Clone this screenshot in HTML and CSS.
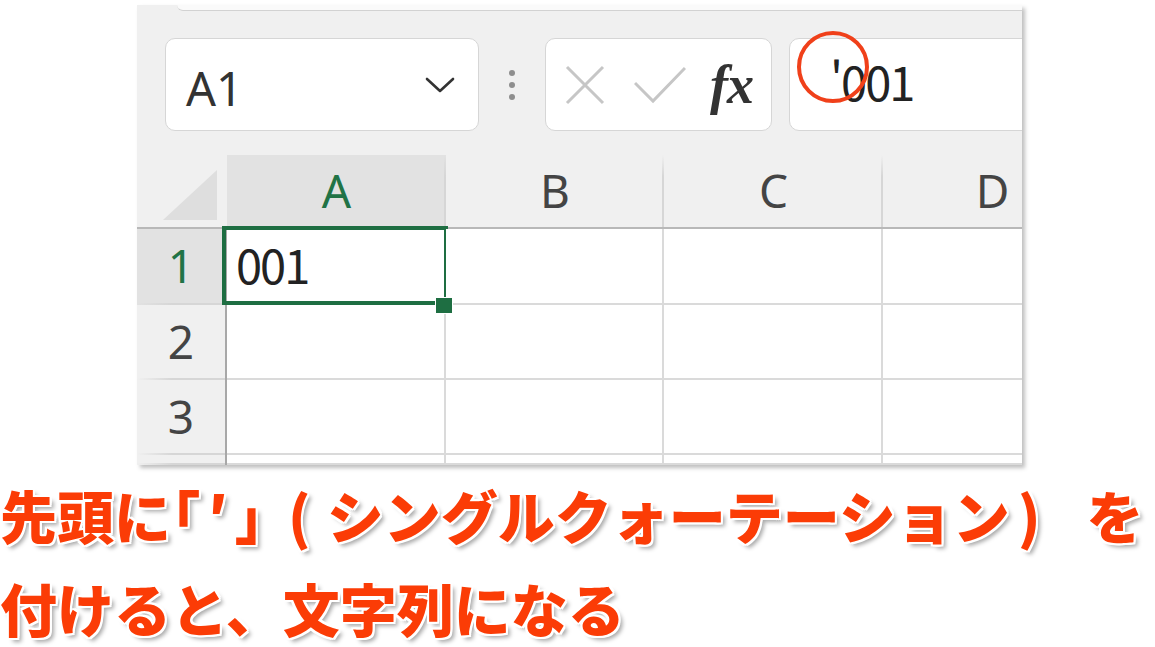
FILE: index.html
```html
<!DOCTYPE html>
<html lang="ja">
<head>
    <meta charset="UTF-8">
    <meta name="viewport" content="width=device-width, initial-scale=1.0">
    <title>先頭に「'」を付けると文字列になる</title>
    <link rel="stylesheet" href="styles.css">
</head>
<body>

    <!-- Excel window crop -->
    <div class="excel">
        <div class="ribbon-edge"></div>

        <div class="formula-row">
            <div class="name-box">
                <span class="ref">A1</span>
                <svg class="chev" width="32" height="18" viewBox="0 0 32 18">
                    <path d="M3 3 L16 15 L29 3" fill="none" stroke="#333" stroke-width="2.6" stroke-linecap="round" stroke-linejoin="round"/>
                </svg>
            </div>
            <div class="grip"><i></i><i></i><i></i></div>
            <div class="fx-box">
                <svg class="icon-x" width="40" height="40" viewBox="0 0 40 40">
                    <path d="M2 2 L38 38 M38 2 L2 38" stroke="#c6c6c6" stroke-width="3"/>
                </svg>
                <svg class="icon-check" width="52" height="38" viewBox="0 0 52 38">
                    <path d="M1 17 L19 35 L51 2" fill="none" stroke="#c6c6c6" stroke-width="3"/>
                </svg>
                <span class="fx">fx</span>
            </div>
            <div class="formula-input">
                <span class="formula-text">'001</span>
                <span class="mark"></span>
            </div>
        </div>

        <div class="sheet">
            <div class="corner">
                <svg width="90" height="74" viewBox="0 0 90 74">
                    <polygon points="80,15 80,65 26,65" fill="#dedede"/>
                </svg>
            </div>
            <div class="col-head active">A</div>
            <div class="col-head">B</div>
            <div class="col-head">C</div>
            <div class="col-head">D</div>

            <div class="row-head active">1</div>
            <div class="cell selected">001<span class="handle"></span></div>
            <div class="cell"></div>
            <div class="cell"></div>
            <div class="cell"></div>

            <div class="row-head">2</div>
            <div class="cell"></div>
            <div class="cell"></div>
            <div class="cell"></div>
            <div class="cell"></div>

            <div class="row-head">3</div>
            <div class="cell"></div>
            <div class="cell"></div>
            <div class="cell"></div>
            <div class="cell"></div>

            <div class="row-head"></div>
            <div class="cell"></div>
            <div class="cell"></div>
            <div class="cell"></div>
            <div class="cell"></div>
        </div>
    </div>

    <div class="caption">
        <p>先頭に<span class="br">「′」</span><span class="paren">(</span>シングルクォーテーション<span class="paren close">)</span>を</p>
        <p>付けると、文字列になる</p>
    </div>

</body>
</html>
```

FILE: styles.css
```css
body {
    margin: 0;
    width: 1155px;
    height: 647px;
    overflow: hidden;
    background: #fff;
    font-family: 'Noto Sans', 'Noto Sans CJK JP', sans-serif;
}
.excel {
    margin: 5px 0 0 137px;
    width: 885px;
    height: 460px;
    background: #f0f0f0;
    overflow: hidden;
    box-shadow: 3px 3px 4px rgba(0, 0, 0, 0.25);
}
.ribbon-edge {
    height: 5px;
    margin-left: 40px;
    background: #fafafa;
    border-bottom: 1px solid #d2d2d2;
    border-bottom-left-radius: 8px;
}

/* formula bar */
.formula-row {
    display: flex;
    padding: 27px 0 0 28px;
    height: 93px;
}
.name-box {
    flex-shrink: 0;
    width: 314px;
    height: 93px;
    box-sizing: border-box;
    background: #fff;
    border: 1px solid #d6d6d6;
    border-radius: 10px;
    display: flex;
    align-items: center;
    justify-content: space-between;
    padding: 6px 22px 0 20px;
}
.ref {
    font-size: 47px;
    color: #333;
}
.chev {
    margin-top: -6px;
}
.grip {
    flex-shrink: 0;
    width: 66px;
    display: flex;
    flex-direction: column;
    align-items: center;
    justify-content: center;
    gap: 6px;
}
.grip i {
    width: 6px;
    height: 6px;
    border-radius: 50%;
    background: #8e8e8e;
}
.fx-box {
    flex-shrink: 0;
    width: 227px;
    height: 93px;
    box-sizing: border-box;
    background: #fff;
    border: 1px solid #d6d6d6;
    border-radius: 10px;
    display: flex;
    align-items: center;
    padding-left: 19px;
}
.icon-x {
    margin-right: 29px;
}
.icon-check {
    margin-right: 24px;
}
.fx {
    font-family: 'Liberation Serif', serif;
    font-style: italic;
    font-weight: bold;
    font-size: 54px;
    color: #333;
    letter-spacing: -1px;
}
.formula-input {
    position: relative;
    flex-shrink: 0;
    margin-left: 17px;
    width: 300px;
    height: 93px;
    box-sizing: border-box;
    background: #fff;
    border: 1px solid #d6d6d6;
    border-radius: 10px;
    padding: 7px 0 0 40px;
}
.formula-text {
    font-family: 'Noto Sans CJK JP', sans-serif;
    font-size: 47px;
    color: #222;
    letter-spacing: -2px;
}
.mark {
    position: absolute;
    left: 7px;
    top: -8px;
    width: 64px;
    height: 64px;
    border: 4.5px solid #f0401a;
    border-radius: 50%;
}

/* grid */
.sheet {
    margin-top: 24px;
    display: grid;
    grid-template-columns: 90px 219px 218px 219px 219px;
    grid-template-rows: 74px 76px 75px 75px 10px;
}
.corner {
    border-bottom: 2px solid #b8b8b8;
    box-sizing: border-box;
}
.corner svg {
    display: block;
}
.col-head {
    box-sizing: border-box;
    border-bottom: 2px solid #b8b8b8;
    background: linear-gradient(to bottom, rgba(214, 214, 214, 0), #d6d6d6 30%) no-repeat right / 2px 100%;
    font-size: 46px;
    color: #444;
    text-align: center;
    line-height: 70px;
}
.col-head.active {
    background-color: #e2e2e2;
    color: #217346;
}
.row-head {
    box-sizing: border-box;
    border-right: 2px solid #a8a8a8;
    background: linear-gradient(to right, rgba(214, 214, 214, 0), #d6d6d6 40%) no-repeat bottom / 100% 2px;
    font-size: 46px;
    color: #444;
    text-align: center;
    line-height: 72px;
}
.row-head.active {
    background-color: #e2e2e2;
    color: #217346;
}
.cell {
    position: relative;
    box-sizing: border-box;
    background: #fff;
    border-right: 2px solid #dadada;
    border-bottom: 2px solid #dadada;
    font-family: 'Noto Sans CJK JP', sans-serif;
    font-size: 47px;
    color: #222;
    letter-spacing: -2px;
    line-height: 70px;
    padding-left: 9px;
}
.cell.selected::after {
    content: "";
    position: absolute;
    left: -5px;
    top: -3px;
    right: -4px;
    bottom: -2px;
    border: 4px solid #1e6e42;
}
.handle {
    position: absolute;
    left: 208px;
    top: 68px;
    width: 16px;
    height: 15px;
    background: #1e6e42;
    border: 1px solid #fff;
    z-index: 1;
}

/* caption */
.caption {
    margin-top: 3px;
    font-family: 'Noto Sans CJK JP', sans-serif;
    font-weight: 900;
    font-size: 57px;
    line-height: 93px;
    color: #fb3c06;
    white-space: nowrap;
    text-shadow: 2px 0 #fff, -2px 0 #fff, 0 2px #fff, 0 -2px #fff,
        2px 2px #fff, -2px -2px #fff, 2px -2px #fff, -2px 2px #fff,
        4px 4px 4px rgba(0, 0, 0, 0.35);
}
.caption p {
    margin: 0;
}
.br {
    font-feature-settings: "palt";
    letter-spacing: 8px;
}
.paren {
    margin: 0 16px;
}
.paren.close {
    margin: 0 46px 0 8px;
}
```
